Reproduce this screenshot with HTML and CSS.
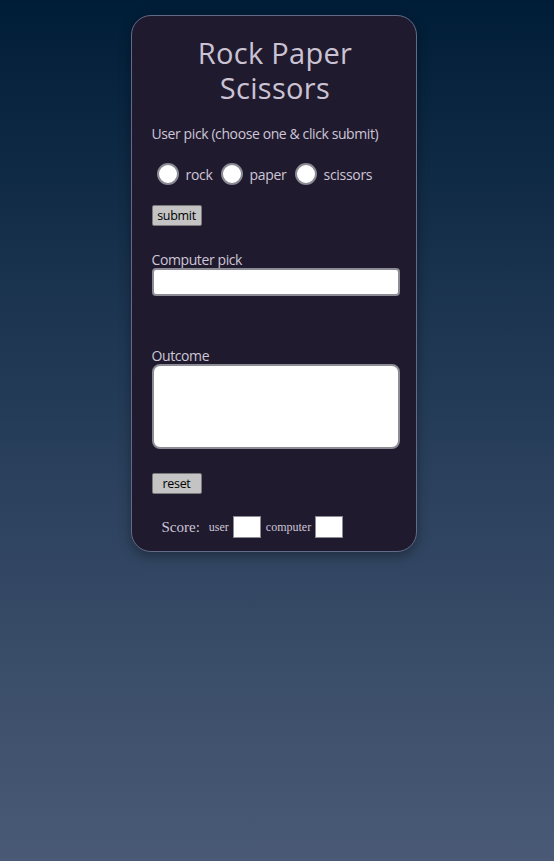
FILE: index.html
```html
<!DOCTYPE html>
<html>
<head>
<meta charset="utf-8">
<link rel="stylesheet" href="styles.css">
</head>
<body>
<div class="card">
  <h1 class="title">Rock Paper Scissors</h1>
  <p class="label">User pick (choose one &amp; click submit)</p>
  <div class="radios">
    <label class="opt"><input type="radio" name="pick" class="radio"><span>rock</span></label>
    <label class="opt"><input type="radio" name="pick" class="radio"><span>paper</span></label>
    <label class="opt"><input type="radio" name="pick" class="radio"><span>scissors</span></label>
  </div>
  <button class="btn btn-submit">submit</button>
  <div class="label field-label">Computer pick</div>
  <input class="field" type="text">
  <div class="label field-label outcome-label">Outcome</div>
  <textarea class="area"></textarea>
  <button class="btn btn-reset">reset</button>
  <div class="score">
    <span class="score-title">Score:</span>
    <span class="score-who">user</span>
    <input class="score-box" type="text">
    <span class="score-who">computer</span>
    <input class="score-box" type="text">
  </div>
</div>
</body>
</html>
```

FILE: styles.css
```css
html { height: 100%; }
body {
  margin: 0;
  min-height: 100%;
  background: linear-gradient(180deg, #001d37 0%, #1f3753 40%, #4a5a76 100%);
  font-family: "Open Sans", sans-serif;
  display: flex;
  justify-content: center;
  align-items: flex-start;
}
.card {
  margin-top: 15px;
  margin-left: -7px;
  width: 247px;
  padding: 16px 17px 13px 20px;
  background: #201a2e;
  border: 1px solid #626a88;
  border-radius: 20px;
  box-shadow: 0 4px 12px rgba(0,0,0,0.35);
  color: #cdc6d6;
  display: flex;
  flex-direction: column;
  align-items: flex-start;
}
.title {
  align-self: center;
  text-align: center;
  margin: 3px 0 0 0;
  width: 220px;
  font-family: "Open Sans", sans-serif;
  font-weight: 400;
  font-size: 29px;
  line-height: 35px;
  color: #cbc3d3;
  letter-spacing: 0.3px;
}
.label {
  margin: 0;
  font-size: 14px;
  line-height: 18px;
  letter-spacing: -0.4px;
}
.title + .label { margin-top: 20px; }
.radios {
  display: flex;
  align-items: center;
  margin-top: 20px;
  margin-left: 5px;
  gap: 8px;
}
.opt {
  display: flex;
  align-items: center;
  gap: 7px;
  font-size: 14px;
  letter-spacing: -0.3px;
}
.radio {
  appearance: none;
  -webkit-appearance: none;
  margin: 0;
  width: 22px;
  height: 22px;
  border-radius: 50%;
  background: #fff;
  border: 2px solid #8a8a92;
  box-sizing: border-box;
}
.btn {
  font-family: "Open Sans", sans-serif;
  font-size: 12.5px;
  line-height: 15px;
  color: #000;
  background: #c4c4c4;
  border: 1px solid #7a7a7a;
  border-radius: 2px;
  padding: 2px 3px;
  box-sizing: border-box;
  height: 21px;
  width: 50px;
  letter-spacing: -0.3px;
}
.btn-submit { margin-top: 20px; }
.field-label { margin-top: 25px; line-height: 17px; }
.field {
  margin-top: 0;
  width: 248px;
  height: 28px;
  box-sizing: border-box;
  border: 2px solid #8c8c94;
  border-radius: 4px;
  background: #fff;
}
.outcome-label { margin-top: 51px; }
.area {
  margin-top: 0;
  width: 248px;
  height: 85px;
  box-sizing: border-box;
  border: 2px solid #8c8c94;
  border-radius: 8px;
  background: #fff;
  resize: none;
  display: block;
}
.btn-reset { margin-top: 24px; }
.score {
  display: flex;
  align-items: center;
  margin-top: 22px;
  margin-left: 10px;
  font-family: "Liberation Serif", serif;
  color: #cdc6d6;
}
.score-title { font-size: 15px; margin-right: 9px; }
.score-who { font-size: 12px; margin-right: 3px; }
.score-box {
  width: 28px;
  height: 22px;
  box-sizing: border-box;
  border: 1px solid #8c8c94;
  background: #fff;
  margin: 0 5px 0 1px;
  padding: 0;
}
```
